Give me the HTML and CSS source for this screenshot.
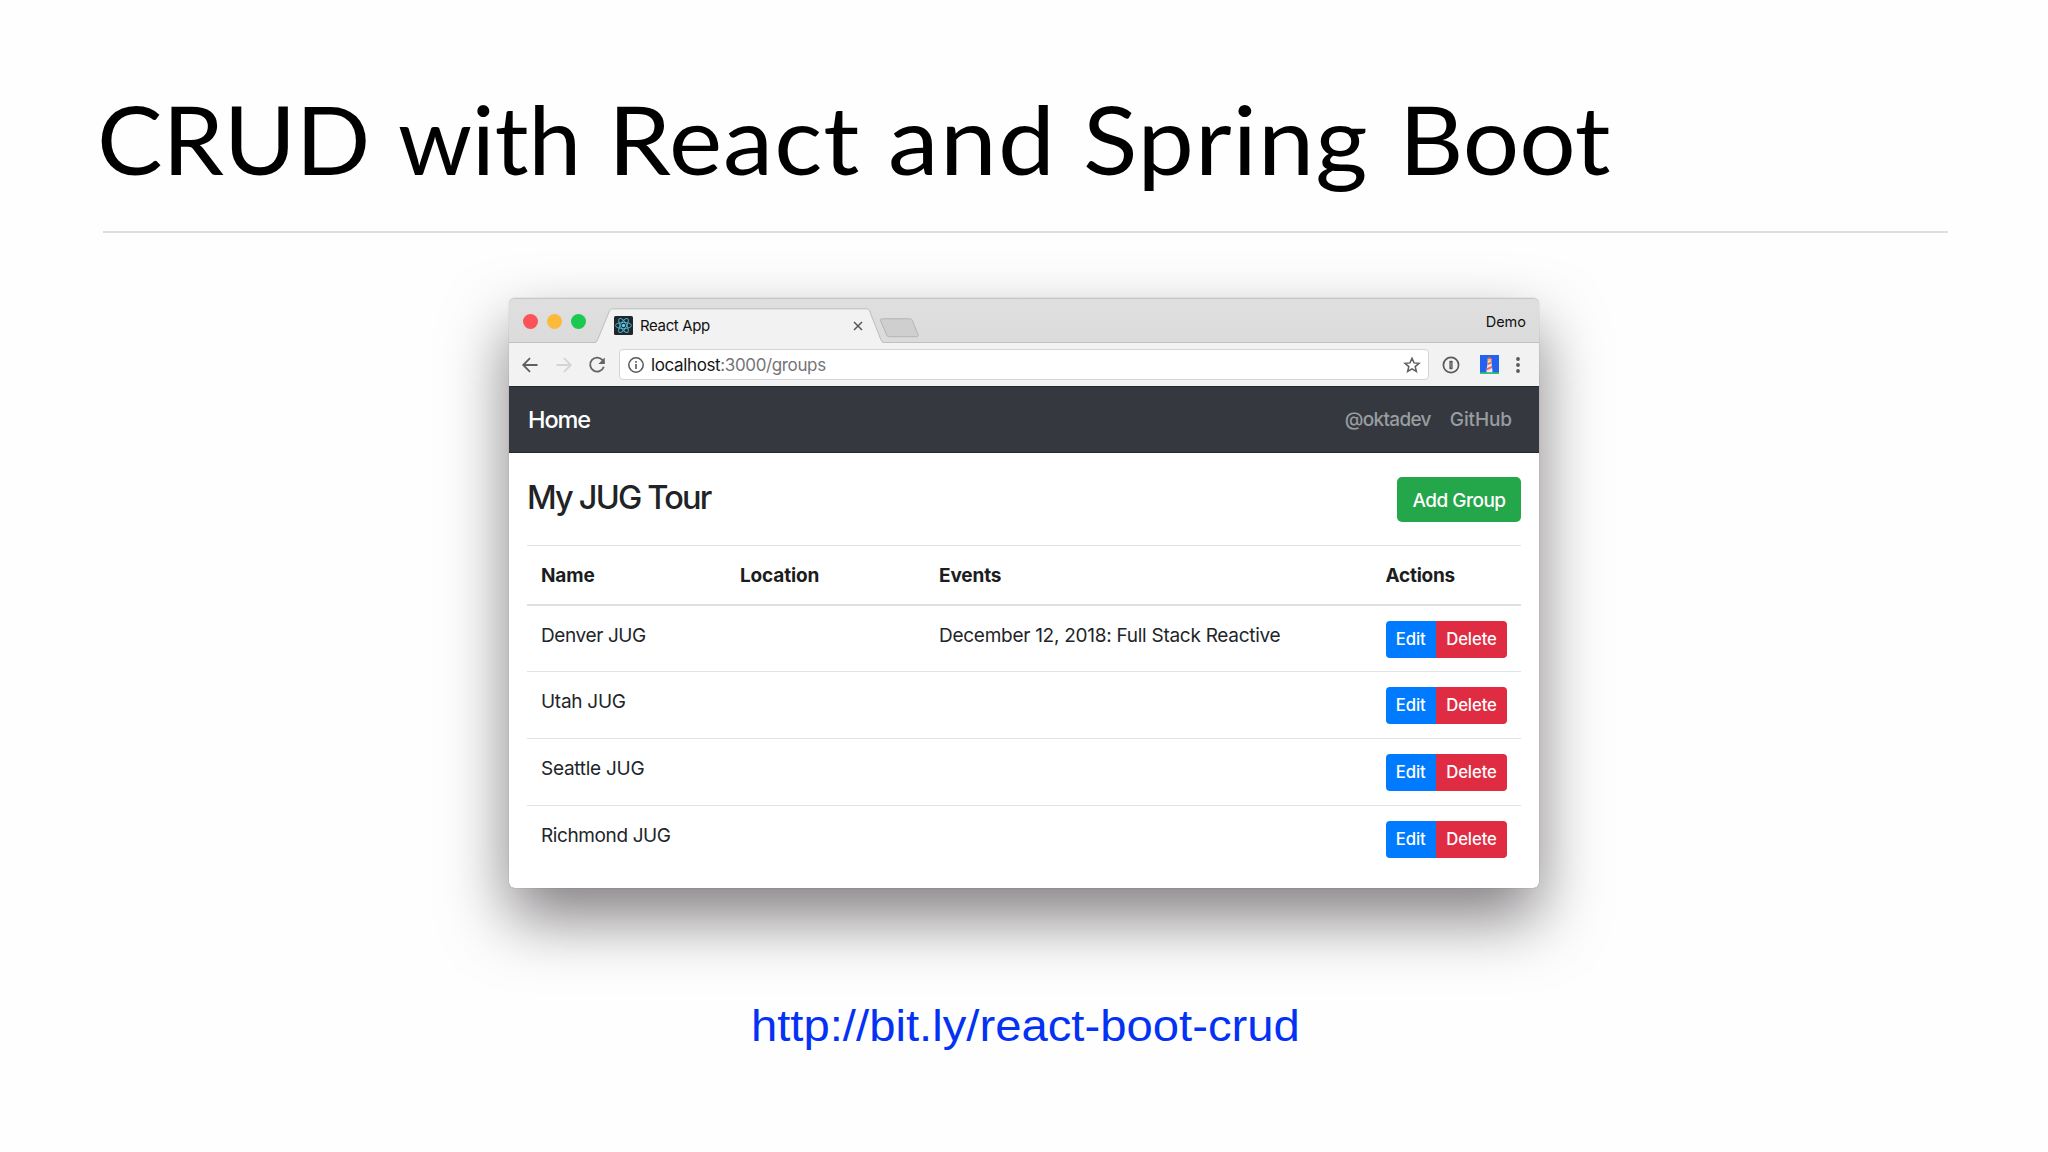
FILE: index.html
```html
<!DOCTYPE html>
<html lang="en">
<head>
<meta charset="utf-8">
<title>CRUD with React and Spring Boot</title>
<link rel="stylesheet" href="styles.css">
</head>
<body>
<main class="slide">
  <h1 class="slide-title">
    <span class="w-crud">CRUD</span> <span class="w-with">with</span> <span class="w-react">React</span> <span class="w-and">and</span> <span class="w-spring">Spring</span> <span class="w-boot">Boot</span>
  </h1>

  <section class="window">
    <header class="titlebar">
      <div class="lights"><i class="light red"></i><i class="light amber"></i><i class="light green"></i></div>
      <div class="tab">
        <svg class="tab-shape" width="290" height="36" viewBox="0 0 290 36">
          <path d="M0 35 C2 35 2.500 34 3.500 32 L15 4 C16 1.500 17 .8 19 .8 H272 C274 .8 275 1.500 276 4 L287 32 C288 34 288.500 35 290 35 V36 H0Z" fill="#f2f2f3"/>
          <path d="M0 34.500 C2 34.500 2.500 34 3.500 32 L15 4 C16 1.500 17 .8 19 .8 H272 C274 .8 275 1.500 276 4 L287 32 C288 34 288.500 34.500 290 34.500" fill="none" stroke="#bdbdbe"/>
        </svg>
        <svg class="favicon" width="19" height="19" viewBox="0 0 19 19">
          <rect width="19" height="19" rx="1.500" fill="#20262b"/>
          <g fill="none" stroke="#4fb4d2" stroke-width=".95">
            <ellipse cx="9.500" cy="9.500" rx="8" ry="3.100"/>
            <ellipse cx="9.500" cy="9.500" rx="8" ry="3.100" transform="rotate(60 9.500 9.500)"/>
            <ellipse cx="9.500" cy="9.500" rx="8" ry="3.100" transform="rotate(120 9.500 9.500)"/>
          </g>
          <circle cx="9.500" cy="9.500" r="1.700" fill="#61cdec"/>
        </svg>
        <span class="tab-title">React App</span>
        <svg class="tab-close" width="10" height="10" viewBox="0 0 10 10"><path d="M1 1l8 8M9 1l-8 8" stroke="#555" stroke-width="1.500"/></svg>
      </div>
      <svg class="new-tab" width="42" height="20" viewBox="0 0 42 20"><path d="M3 .8H30.500C32 .8 32.700 1.300 33.300 2.500L39 16.500C39.600 18 39 18.700 37.800 18.700H10.500C9 18.700 8.300 18.300 7.700 17L1.600 2.800C1 1.500 1.500 .8 3 .8Z" fill="#cfcfcf" stroke="#b4b4b4"/></svg>
      <span class="profile">Demo</span>
    </header>

    <div class="toolbar">
      <svg class="back" width="18" height="18" viewBox="0 0 18 18"><path d="M16.500 9H2.500M9 2.200L2.200 9L9 15.800" fill="none" stroke="#5e5f61" stroke-width="1.800"/></svg>
      <svg class="forward" width="18" height="18" viewBox="0 0 18 18"><path d="M1.500 9H15.500M9 2.200L15.800 9L9 15.800" fill="none" stroke="#d4d4d5" stroke-width="1.800"/></svg>
      <svg class="reload" width="18" height="18" viewBox="0 0 18 18"><path d="M14.800 4.400A7 7 0 1 0 15.800 10.800" fill="none" stroke="#636466" stroke-width="1.800"/><path d="M16.800 1.500V8H10.300Z" fill="#636466"/></svg>
      <div class="address">
        <svg width="18" height="18" viewBox="0 0 18 18"><circle cx="9" cy="9" r="7.200" fill="none" stroke="#58595b" stroke-width="1.500"/><path d="M9 8V13M9 5V6.700" stroke="#58595b" stroke-width="1.600"/></svg>
        <span class="url"><b>localhost</b>:3000/groups</span>
        <svg class="star" width="18" height="18" viewBox="0 0 18 18"><path d="M9 2.300L11 6.900L16 7.300L12.200 10.600L13.400 15.500L9 12.900L4.600 15.500L5.800 10.600L2 7.300L7 6.900Z" fill="none" stroke="#5c5d60" stroke-width="1.500"/></svg>
      </div>
      <svg class="key" width="18" height="18" viewBox="0 0 18 18"><circle cx="9" cy="9" r="7.600" fill="none" stroke="#58595b" stroke-width="1.700"/><rect x="7.400" y="4.700" width="3.200" height="8.600" rx=".6" fill="#58595b"/><path d="M9 6.500V8.500L8.600 9.300L9.300 10.200V11.500" fill="none" stroke="#b5b5b7" stroke-width=".7"/></svg>
      <svg class="lighthouse" width="19" height="19" viewBox="0 0 19 19"><rect width="19" height="19" fill="#2362ef"/><path d="M0 17.300H19V19H0Z" fill="#2fc56d"/><path d="M7.700 6H11.300L12.600 17.300H6.400Z" fill="#f5e8e8"/><path d="M7.500 8L11.400 6.300L11.600 8.500L7.200 10.600ZM7 13L12 10.700L12.300 13L6.700 15.600Z" fill="#ef6d5e"/><path d="M7.500 3.500H11.500V6H7.500Z" fill="#f6c15c"/><path d="M7.300 3.700L9.500 1.500L11.700 3.700Z" fill="#e9574c"/></svg>
      <svg class="menu" width="6" height="18" viewBox="0 0 6 18"><g fill="#58595b"><circle cx="3" cy="3" r="1.900"/><circle cx="3" cy="9" r="1.900"/><circle cx="3" cy="15" r="1.900"/></g></svg>
    </div>

    <nav class="navbar"><a class="brand">Home</a><a class="nav-okta">@oktadev</a><a class="nav-git">GitHub</a></nav>

    <div class="content">
      <div class="heading"><h3>My JUG Tour</h3><button class="add">Add Group</button></div>
      <div class="table">
        <div class="row head"><b>Name</b><b>Location</b><b>Events</b><b class="actions-head">Actions</b></div>
        <div class="row"><span class="denver">Denver JUG</span><span></span><span>December 12, 2018: Full Stack Reactive</span><div class="group"><button class="edit">Edit</button><button class="delete">Delete</button></div></div>
        <div class="row"><span>Utah JUG</span><span></span><span></span><div class="group"><button class="edit">Edit</button><button class="delete">Delete</button></div></div>
        <div class="row"><span>Seattle JUG</span><span></span><span></span><div class="group"><button class="edit">Edit</button><button class="delete">Delete</button></div></div>
        <div class="row"><span class="denver">Richmond JUG</span><span></span><span></span><div class="group"><button class="edit">Edit</button><button class="delete">Delete</button></div></div>
      </div>
    </div>
  </section>

  <a class="link">http://bit.ly/react-boot-crud</a>
</main>
</body>
</html>
```
FILE: styles.css
```css
* { box-sizing: border-box; }
body { margin: 0; background: #fefefe; font-family: Inter, "Liberation Sans", sans-serif; }
svg { display: block; flex: none; }
button { border: 0; padding: 0; font: inherit; color: #fff; }

.slide { width: 2048px; height: 1152px; padding: 78px 100px 0 103px; display: flex; flex-direction: column; overflow: hidden; }
.slide-title {
  margin: 0; height: 155px; border-bottom: 2px solid #dedede;
  display: grid; grid-template-columns: 301px 210px 280px 195px 316px 300px;
  font: 400 95px/120px Lato, sans-serif; color: #000; white-space: nowrap;
}
.slide-title span { margin-left: -6px; transform-origin: 0 50%; }
.w-crud { transform: scaleX(1.033); }
.w-with { transform: scaleX(.992); }
.w-react { transform: scaleX(1.06); letter-spacing: 1px; }
.w-and { transform: scaleX(1.07); letter-spacing: 1.3px; }
.w-spring { transform: scaleX(1.06); letter-spacing: 1px; }
.w-boot { transform: scaleX(1.049); }

.window {
  width: 1030px; height: 590px; margin: 65px 0 0 406px; flex: none;
  display: flex; flex-direction: column; background: #fff; border-radius: 6px;
  box-shadow: 0 0 1px rgba(0,0,0,.4), 0 30px 64px rgba(10,0,8,.5);
}

.titlebar {
  height: 45px; display: flex; border-radius: 6px 6px 0 0;
  background: linear-gradient(#dfdfdf, #dbdbdb);
  border-top: 1px solid #c6c6c6; border-bottom: 1px solid #c0c0c1;
}
.lights { width: 85px; padding: 15px 0 0 14px; display: flex; gap: 9px; }
.light { width: 15px; height: 15px; border-radius: 50%; }
.red { background: #fc5358; }
.amber { background: #fdb93c; }
.green { background: #1ac950; }
.tab { position: relative; width: 285px; height: 44px; padding-left: 20px; display: flex; }
.tab-shape { position: absolute; left: 0; top: 9px; }
.favicon { position: relative; margin-top: 17px; }
.tab-title { position: relative; margin: 16px 0 0 7px; font-size: 15px; line-height: 21px; letter-spacing: -.37px; color: #111; width: 209px; }
.tab-close { position: relative; margin: 22px 0 0 4px; }
.new-tab { margin-top: 19px; }
.profile { margin: 13px 13px 0 auto; font-size: 14.5px; line-height: 20px; color: #111; }

.toolbar { height: 43px; display: flex; align-items: center; background: #f2f2f3; padding-left: 12px; }
.forward { margin-left: 16px; }
.reload { margin-left: 15px; }
.address {
  width: 810px; height: 31px; margin-left: 13px; padding: 0 7px; display: flex; align-items: center;
  background: #fff; border: 1px solid #d5d5d7; border-radius: 4px;
}
.url { margin: 0 auto 0 6px; font-size: 17px; line-height: 24px; letter-spacing: -.37px; color: #747578; }
.url b { font-weight: 400; color: #161616; }
.key { margin-left: 13px; }
.lighthouse { margin-left: 20px; }
.menu { margin-left: 16px; }

.navbar { height: 67px; padding: 0 27px 0 19px; display: flex; align-items: center; background: #35393f; border-top: 1px solid #24272c; border-bottom: 1px solid #24272c; font-size: 19px; font-weight: 500; color: #999da1; }
.brand { margin-right: auto; font-size: 23.5px; letter-spacing: -1.1px; color: #fff; }
.nav-okta { letter-spacing: -.7px; margin-right: 19px; }
.nav-git { letter-spacing: -.1px; }

.content { padding: 24px 18px 0; color: #212529; }
.heading { display: flex; justify-content: space-between; height: 68px; }
.heading h3 { margin: 0; font-size: 32.500px; line-height: 42px; font-weight: 500; letter-spacing: -1.8px; color: #212325; }
.add { width: 124px; height: 45px; padding-top: 1px; border-radius: 5px; background: #24a64a; font-size: 19px; font-weight: 500; letter-spacing: -.5px; }

.row {
  display: grid; grid-template-columns: 199px 199px 446.5px 1fr; height: 66.8px;
  padding: 15px 0 0 14px; border-top: 1.500px solid #e2e3e6;
  font-size: 19px; line-height: 29px; letter-spacing: -.27px;
}
.row.head { height: 58.5px; letter-spacing: -.15px; color: #1b1d20; }
.row.head + .row { border-top: 2px solid #dfe0e3; height: 67.5px; }
.denver { letter-spacing: -.39px; }
.actions-head { letter-spacing: -.25px; }
.group { display: flex; }
.group button { height: 37px; font-size: 16.7px; line-height: 37px; font-weight: 500; letter-spacing: -.1px; }
.edit { width: 50.500px; background: #007bff; border-radius: 4px 0 0 4px; }
.delete { width: 71px; background: #df2c43; border-radius: 0 4px 4px 0; }

.link { align-self: center; margin-top: 108px; font: 400 45px/60px "Liberation Sans", Arial, sans-serif; transform: scaleX(1.05); color: #0432f5; }
```
